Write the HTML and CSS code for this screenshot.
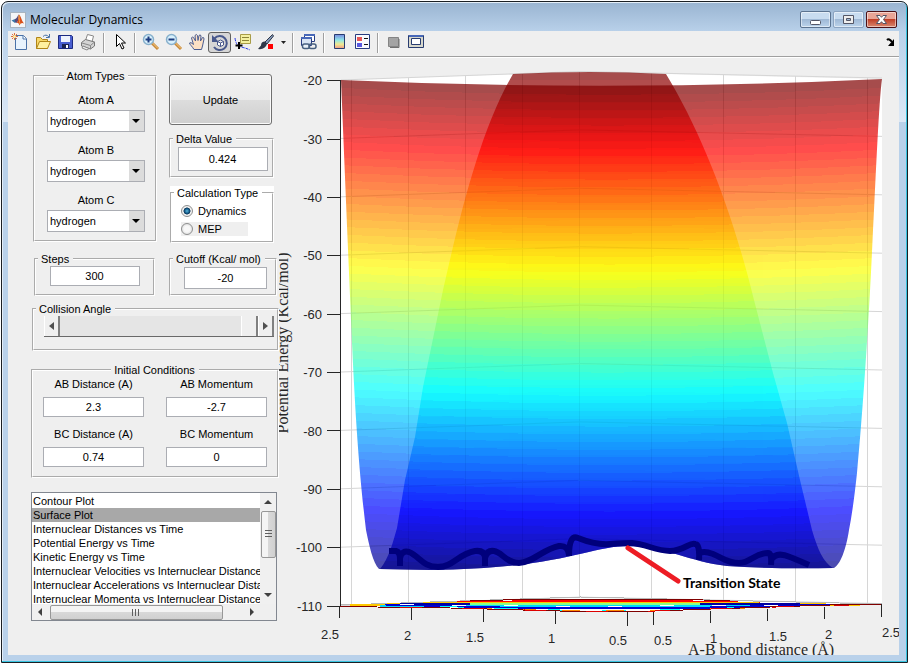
FILE: index.html
```
<!DOCTYPE html>
<html lang="en">
<head>
  <meta charset="UTF-8">
  <title>Molecular Dynamics</title>
  <link rel="stylesheet" href="styles.css">
</head>
<body>
  <div class="window">
    <header class="titlebar">
      <svg class="app-icon" viewBox="0 0 16 16">
        <rect x=".5" y=".5" width="15" height="15" fill="#f4f6f8" stroke="#a8b4c0"/>
        <path d="M1.500 8.500 5 7l2 2-2 2z" fill="#3a78a8"/>
        <path d="M5 7c2 0 2.500-4 4-4.500L8 9l-1.500 2L5 10z" fill="#5a4a78"/>
        <path d="M9 2.500c1.500.5 2.500 6 5 9-2-.8-3-.8-4.500 2C9 11.500 8 10.500 6.500 11 8.500 9 8.500 5 9 2.500z" fill="#d8501c"/>
        <path d="M9 3c.3 4 .3 7 1 9" stroke="#f8a040" fill="none"/>
      </svg>
      <h1>Molecular Dynamics</h1>
      <div class="window-buttons">
        <button type="button" aria-label="Minimize"><svg viewBox="0 0 31 17"><rect x="10.500" y="9.500" width="10" height="4" rx="1" fill="#fff" stroke="#535666"/></svg></button>
        <button type="button" class="dim" aria-label="Maximize"><svg viewBox="0 0 31 17"><path d="M10.500 4.500h10v8h-10zM13.500 7.500v2h4v-2z" fill="#eee" fill-rule="evenodd" stroke="#535666"/></svg></button>
        <button type="button" class="close" aria-label="Close"><svg viewBox="0 0 31 17"><path d="M10.500 4.500h3.500l1.500 1.800L17 4.500h3.500l-3 4 3 4H17l-1.500-1.800-1.500 1.800h-3.500l3-4z" fill="#fff" stroke="#535666"/></svg></button>
      </div>
    </header>

    <main class="client">
      <div class="toolbar">
        <button type="button" aria-label="New Figure"><svg viewBox="0 0 18 18"><path d="M4.500 2.500h8l3 3v11h-11z" fill="#e8f3fd" stroke="#4a72a8"/><path d="M12 2.500v3.500h3.500" fill="#fff" stroke="#4a72a8"/><path d="M1 1l5 5M6 1 1 6M3.500 0v7M0 3.500h7" stroke="#e0703c"/><circle cx="3.500" cy="3.500" r="1.500" fill="#fff0a0"/></svg></button>
        <button type="button" aria-label="Open File"><svg viewBox="0 0 18 18"><path d="M2.500 15.500v-11h4l2 2h5v9z" fill="#f8d868" stroke="#b08418"/><path d="M2.500 15.500l3-7h11l-3 7z" fill="#fff0a0" stroke="#b08418"/><path d="M9 3.500q3-3 6 .5M15.500 1v3.500H12" fill="none" stroke="#4a72a8"/></svg></button>
        <button type="button" aria-label="Save Figure"><svg viewBox="0 0 18 18"><path d="M1.500 2.500h13l1 1v12h-14z" fill="#4a5fd0" stroke="#1c2a80"/><path d="M4 3h9v6H4z" fill="#eef2fc"/><path d="M5 11h7v4H5z" fill="#1c2450"/><path d="M9 12h2v3H9z" fill="#fff"/></svg></button>
        <button type="button" aria-label="Print Figure"><svg viewBox="0 0 18 18"><path d="M5.500 7.500l2-6 6 1.500-1.500 6z" fill="#fff" stroke="#888"/><path d="M1.500 9.500l4-3 9 2.500v4l-4 3-9-3z" fill="#d4d4d4" stroke="#777"/><path d="M2 10l8.500 2.500L14.500 9M10.500 12.500V16" fill="none" stroke="#888"/><path d="M3 13l6 2.500-2 1.500-5-2z" fill="#eee" stroke="#888"/></svg></button>
        <span class="separator"></span>
        <button type="button" aria-label="Edit Plot"><svg viewBox="0 0 18 18"><path d="M5.500 1.500v12l3-3 2.500 5.500 2-1L10.500 10h4z" fill="#fff" stroke="#000"/></svg></button>
        <span class="separator"></span>
        <button type="button" aria-label="Zoom In"><svg viewBox="0 0 18 18"><path d="M10 10l6 6" stroke="#c88838" stroke-width="3"/><path d="M10 9.500l6 6" stroke="#f8d088"/><circle cx="6.500" cy="6.500" r="5" fill="#d8f0fc" stroke="#88b0cc" stroke-width="1.500"/><path d="M3.500 6.500h6M6.500 3.500v6" stroke="#1c3c80" stroke-width="2"/></svg></button>
        <button type="button" aria-label="Zoom Out"><svg viewBox="0 0 18 18"><path d="M10 10l6 6" stroke="#c88838" stroke-width="3"/><path d="M10 9.500l6 6" stroke="#f8d088"/><circle cx="6.500" cy="6.500" r="5" fill="#d8f0fc" stroke="#88b0cc" stroke-width="1.500"/><path d="M3.500 6.500h6" stroke="#1c3c80" stroke-width="2"/></svg></button>
        <button type="button" aria-label="Pan"><svg viewBox="0 0 18 18"><path d="M6 16.500C4 13 2 12 1.500 10q1-1.500 4 1.500L3.500 5Q4.500 3 5.500 4.500L7.500 8 7 2.500Q8.500.5 9.500 2.500L10 7.500l1-5q1.500-1.500 2 .5L12.500 8l2-3.500q1.500-.5 1.500 1.500l-1.500 7-1 3.500z" fill="#fce0c4" stroke="#4a5c90"/></svg></button>
        <button type="button" class="pressed" aria-label="Rotate 3D"><svg viewBox="0 0 18 18"><path d="M3.500 4.500A7 7 0 1 1 3 13" fill="none" stroke="#48588c" stroke-width="2"/><path d="M1 1v7h7z" fill="#48588c"/><path d="M6.500 7.500l3-1.500 3 1.500v3.500l-3 1.500-3-1.500zM6.500 7.500l3 1.500 3-1.500M9.500 9v3.500" fill="#fff" stroke="#48588c"/></svg></button>
        <button type="button" aria-label="Data Cursor"><svg viewBox="0 0 18 18"><path d="M1 5q1 8 6 9t9 3" fill="none" stroke="#2838e8" stroke-dasharray="3 1"/><path d="M6.500 1.500h10v9h-10z" fill="#f4f0a0" stroke="#a89c48"/><path d="M8 4.500h7M8 7.500h7" stroke="#8c8438"/><path d="M5 9v7M1.500 12.500h7" stroke="#000" stroke-width="2"/></svg></button>
        <button type="button" aria-label="Brush"><svg viewBox="0 0 18 18"><path d="M15.500 1.500L8 9l2 2 6.500-8z" fill="#8498b8" stroke="#303848"/><path d="M8 8.500q-4 0-4 4L1 16q7 1 9-5z" fill="#303848"/><path d="M11 11h5v5h-5z" fill="#f00"/></svg></button>
        <button type="button" class="drop" aria-label="Brush options"><svg viewBox="0 0 12 18"><path d="M4 8h5l-2.500 3z" fill="#222"/></svg></button>
        <span class="separator"></span>
        <button type="button" aria-label="Link Plot"><svg viewBox="0 0 18 18"><path d="M4.500 1.500h10v7h-10z" fill="#fff" stroke="#283c80"/><path d="M4 2h11" stroke="#4868b8" stroke-width="2"/><path d="M1.500 4.500h10v8h-10z" fill="#d8e4f4" stroke="#283c80"/><path d="M1 5h11" stroke="#4868b8" stroke-width="2"/><rect x="2.500" y="11" width="7" height="4.500" rx="2" fill="#e8f0f8" stroke="#486080" stroke-width="1.500"/><rect x="9" y="11" width="7" height="4.500" rx="2" fill="none" stroke="#486080" stroke-width="1.500"/></svg></button>
        <span class="separator"></span>
        <button type="button" aria-label="Insert Colorbar"><svg viewBox="0 0 18 18"><defs><linearGradient id="bar" x2="0" y2="1"><stop offset="0" stop-color="#7888e0"/><stop offset=".4" stop-color="#90e8e8"/><stop offset=".7" stop-color="#f0e890"/><stop offset="1" stop-color="#f09888"/></linearGradient></defs><path d="M3.500 1.500h10v14h-10z" fill="url(#bar)" stroke="#283c70"/></svg></button>
        <button type="button" aria-label="Insert Legend"><svg viewBox="0 0 18 18"><path d="M1.500 1.500h14v14h-14z" fill="#f8fafe" stroke="#283c80"/><path d="M3 4h5v4H3z" fill="#e85858"/><path d="M3 10h5v4H3z" fill="#5858e0"/><path d="M10 5.500h4M10 11.500h4" stroke="#111"/></svg></button>
        <span class="separator"></span>
        <button type="button" aria-label="Hide Plot Tools"><svg viewBox="0 0 18 18"><path d="M3.500 4.500h10v9h-10z" fill="#a4a4a4" stroke="#848484"/><path d="M14 6v8.500H5" fill="none" stroke="#707070"/></svg></button>
        <button type="button" aria-label="Show Plot Tools"><svg viewBox="0 0 18 18"><path d="M.5 2.500h15v12h-15z" fill="#d8d8cc" stroke="#283c70"/><path d="M1 3h14" stroke="#4868b8" stroke-width="2"/><path d="M3.500 5.500h9v6h-9z" fill="#fff" stroke="#283c70"/></svg></button>
        <button type="button" class="dock" aria-label="Dock Figure"><svg viewBox="0 0 12 18"><path d="M2 7q2-2 5 2" fill="none" stroke="#000" stroke-width="2"/><path d="M9 6v7H3z" fill="#000"/></svg></button>
      </div>

      <div class="figure">
        <form class="controls">
          <div class="columns">
            <fieldset class="atoms">
              <legend>Atom Types</legend>
              <label for="atomA">Atom A</label>
              <span class="dropdown"><select id="atomA"><option>hydrogen</option></select></span>
              <label for="atomB">Atom B</label>
              <span class="dropdown"><select id="atomB"><option>hydrogen</option></select></span>
              <label for="atomC">Atom C</label>
              <span class="dropdown"><select id="atomC"><option>hydrogen</option></select></span>
            </fieldset>

            <div class="column">
              <button type="button" class="update">Update</button>
              <fieldset class="delta">
                <legend><label for="delta">Delta Value</label></legend>
                <input type="text" id="delta" value="0.424">
              </fieldset>
              <div class="calc">
                <fieldset>
                  <legend>Calculation Type</legend>
                  <label class="radio"><input type="radio" name="calc" checked>Dynamics</label>
                  <label class="radio shaded"><input type="radio" name="calc">MEP</label>
                </fieldset>
              </div>
            </div>
          </div>

          <div class="columns limits">
            <fieldset class="steps">
              <legend><label for="steps">Steps</label></legend>
              <input type="text" id="steps" value="300">
            </fieldset>
            <fieldset class="cutoff">
              <legend><label for="cutoff">Cutoff (Kcal/ mol)</label></legend>
              <input type="text" id="cutoff" value="-20">
            </fieldset>
          </div>

          <fieldset class="angle">
            <legend><label for="angle">Collision Angle</label></legend>
            <div class="slider">
              <button type="button" aria-label="Decrease angle"><svg viewBox="0 0 5 8"><path d="M5 0v8L0 4z"/></svg></button>
              <input type="range" id="angle" min="0" max="180" value="180">
              <button type="button" aria-label="Increase angle"><svg viewBox="0 0 5 8"><path d="M0 0v8l5-4z"/></svg></button>
            </div>
          </fieldset>

          <fieldset class="initial">
            <legend>Initial Conditions</legend>
            <div class="conditions">
              <div class="field"><label for="abDist">AB Distance (A)</label><input type="text" id="abDist" value="2.3"></div>
              <div class="field"><label for="abMom">AB Momentum</label><input type="text" id="abMom" value="-2.7"></div>
              <div class="field"><label for="bcDist">BC Distance (A)</label><input type="text" id="bcDist" value="0.74"></div>
              <div class="field"><label for="bcMom">BC Momentum</label><input type="text" id="bcMom" value="0"></div>
            </div>
          </fieldset>

          <div class="plot-list">
            <select size="8" aria-label="Plot type">
              <option>Contour Plot</option>
              <option selected>Surface Plot</option>
              <option>Internuclear Distances vs Time</option>
              <option>Potential Energy vs Time</option>
              <option>Kinetic Energy vs Time</option>
              <option>Internuclear Velocities vs Internuclear Distance</option>
              <option>Internuclear Accelerations vs Internuclear Distance</option>
              <option>Internuclear Momenta vs Internuclear Distance</option>
            </select>
            <div class="scrollbar vertical">
              <svg viewBox="0 0 8 4"><path d="M0 4h8L4 0z"/></svg>
              <span class="thumb"></span>
              <svg viewBox="0 0 8 4"><path d="M0 0h8L4 4z"/></svg>
            </div>
            <div class="scrollbar horizontal">
              <svg viewBox="0 0 4 8"><path d="M4 0v8L0 4z"/></svg>
              <span class="thumb"></span>
              <svg viewBox="0 0 4 8"><path d="M0 0v8l4-4z"/></svg>
            </div>
          </div>
        </form>

        <svg class="plot" viewBox="279 57 620 598" preserveAspectRatio="xMinYMin meet">
          <defs>
            <clipPath id="frontClip">
              <path d="M341 80Q610 92 882 79C879 100 876 170 873 230C870 300 864 400 857 473Q853 510 849 530C846 550 840 565 834 568Q770 569 727 566C690 562 665 546 628 546C590 546 560 569 430 570L379 569C373 563 369 545 366 530C360 480 356 430 352 343L347 226Z"/>
            </clipPath>
            <clipPath id="backClip">
              <path d="M513 74Q590 70 666 74C700 130 731 206 754 300L773 373 787 423 800 480 812 530C818 550 823 562 833 568Q770 569 727 566C690 562 665 546 628 546C590 546 560 569 430 570L380 569C389 558 393 542 397 528L405 480 415 437 423 387 443 290C460 215 480 130 513 74Z"/>
            </clipPath>
          </defs>

          <path d="M341 80 580 72 882 79V604L640 612 341 606Z" fill="#fff"/>
          <g id="grid" class="grid"></g>

          <g id="back" clip-path="url(#backClip)" opacity=".7"></g>
          <g id="front" clip-path="url(#frontClip)" opacity=".7"></g>
          <g id="gridOver" class="grid over"></g>

          <!-- trajectory on the surface -->
          <path class="trail" d="M389 551h7q4 1 4 8v7M400 558q2-8 9-6c10 4 14 15 29 15s20-13 37-16q9-1 10 6v9M485 558q2-8 9-7c8 1 12 12 25 12s24-14 40-17q9-1 10 9M569 556q0-22 9-18c10 4 20 7 32 6q15-1 22-1c14 1 24 8 38 8 13 0 20-9 25-7q5 0 4 16M700 554q2-4 13 0c10 4 14 9 26 9s15-10 29-10q4 0 3 12M771 560c4-7 12-6 19-3q10 4 19 8"/>

          <!-- contours projected on the floor -->
          <g class="contours">
            <path stroke="#b8b8b8" d="M341 605 580 597 882 604"/>
            <path stroke="#800000" d="M470 601 520 599.500 580 599H650L730 600.500"/>
            <path stroke="#f00" stroke-width="2" d="M430 603 540 601H670L760 603"/>
            <path stroke="#ffc800" stroke-width="2" d="M350 605.500 460 602.500 560 602.500H690L860 605"/>
            <path stroke="#8f8" stroke-width="2" d="M400 604.500 530 604H680L780 605"/>
            <path stroke="#00d8ff" stroke-width="2" d="M380 605.500 500 605.500 600 606H700L830 604.500"/>
            <path stroke="#0000d0" stroke-width="2" d="M385 604.500 500 607.500 600 608H690L830 604.500"/>
            <path stroke="#0000a0" stroke-width="2" d="M400 603.500 470 604.500M700 604.500 800 603.500"/>
            <path stroke="#fff" stroke-dasharray="14 38" d="M400 604.500 520 606 650 606 790 605"/>
            <path stroke="#0ff" stroke-dasharray="24 30" d="M440 606.500 560 610H660L760 607"/>
            <path stroke="#f80" stroke-dasharray="18 26" d="M430 607 560 610 640 611 780 607"/>
            <path stroke="#800000" d="M340 606.500 450 608 560 611H655L740 608 830 605 882 604.500"/>
            <path stroke="#d00" stroke-dasharray="22 40" d="M400 607.500 470 608.500 560 611H655L740 608 850 605"/>
          </g>

          <g class="axes">
            <path d="M340.500 80V606M327 80.500h13M327 139h13M327 197.500h13M327 255.500h13M327 314h13M327 372.500h13M327 430.500h13M327 489.500h13M327 547.500h13M327 606h13"/>
            <path d="M339.500 606v12M411.500 608v12M483.500 609v13M555.500 611v13M627.500 612v14M653.500 612v13M710.500 611v12M767.500 609v12M824.500 607v12M881.500 604v13"/>
          </g>

          <g class="ticks" text-anchor="end">
            <text x="322" y="85">-20</text>
            <text x="322" y="144">-30</text>
            <text x="322" y="202">-40</text>
            <text x="322" y="260">-50</text>
            <text x="322" y="319">-60</text>
            <text x="322" y="377">-70</text>
            <text x="322" y="436">-80</text>
            <text x="322" y="494">-90</text>
            <text x="322" y="552">-100</text>
            <text x="322" y="611">-110</text>
          </g>
          <g class="ticks">
            <text x="321" y="639">2.5</text>
            <text x="404" y="640">2</text>
            <text x="466" y="642">1.5</text>
            <text x="548" y="643">1</text>
            <text x="609" y="645">0.5</text>
            <text x="654" y="645">0.5</text>
            <text x="710" y="643">1</text>
            <text x="769" y="641">1.5</text>
            <text x="825" y="639">2</text>
            <text x="882" y="637">2.5</text>
          </g>
          <text class="axis-title" x="688" y="655">A-B bond distance (Å)</text>
          <text class="axis-title" text-anchor="middle" transform="translate(288 343) rotate(-90)">Potential Energy (Kcal/mol)</text>

          <path d="M628 548 678 581" stroke="#ed1c24" stroke-width="5" stroke-linecap="round"/>
          <text class="note" x="683" y="588">Transition State</text>
        </svg>
      </div>
    </main>
  </div>
  <script src="plot.js"></script>
</body>
</html>
```
FILE: styles.css
```
:root {
  --face: #efefef;
  --frame: #b9d1ea;
  --line: #abadb3;
}

* {
  box-sizing: border-box;
  margin: 0;
  padding: 0;
}

body {
  display: flex;
  height: 100vh;
  padding: 1px;
  background: #fff;
  font-family: "Liberation Sans", Arial, sans-serif;
  font-size: 11px;
  line-height: 14px;
  color: #000;
  overflow: hidden;
}

button, input, select {
  font: inherit;
  color: inherit;
}

.window {
  flex: 1;
  display: flex;
  flex-direction: column;
  min-width: 0;
  padding: 0 8px 7px 6px;
  border: 1px solid #1a1f24;
  border-radius: 7px 7px 0 0;
  background: linear-gradient(#99b4d1, #b9d1ea 30px, #dce8f6 120px, var(--frame) 120px);
  box-shadow: inset -1px -1px 0 #38c4e0, inset 1px 1px 0 #e4eef8;
}

/* title bar */
.titlebar {
  display: flex;
  align-items: center;
  gap: 4px;
  height: 29px;
  padding: 6px 2px 0;
}

.app-icon {
  width: 16px;
  height: 16px;
}

.titlebar h1 {
  flex: 1;
  font-family: "Open Sans", "Noto Sans", sans-serif;
  font-size: 12px;
  font-weight: 400;
}

.window-buttons {
  display: flex;
  gap: 2px;
}

.window-buttons button {
  width: 31px;
  height: 17px;
  border: 1px solid #5b7390;
  border-radius: 2px;
  background: linear-gradient(#c8dcf0 45%, #9fb9d6 50%, #bcd4ec);
  box-shadow: inset 0 0 0 1px rgba(255, 255, 255, 0.5);
}

.window-buttons svg {
  display: block;
  width: 31px;
  height: 17px;
  margin: -1px;
}

.window-buttons .dim {
  border-color: #8ba3c0;
}

.window-buttons .close {
  border-color: #4c1015;
  background: linear-gradient(#e9a596 45%, #c04028 50%, #d88870);
}

/* toolbar */
.client {
  flex: 1;
  display: flex;
  flex-direction: column;
  min-height: 0;
  background: var(--face);
}

.toolbar {
  display: flex;
  height: 26px;
  padding-bottom: 3px;
  border-bottom: 1px solid #a0a0a0;
  box-shadow: 0 1px 0 #fff;
}

.toolbar button {
  display: flex;
  align-items: center;
  justify-content: center;
  width: 23px;
  border: 0;
  background: none;
}

.toolbar svg {
  width: 18px;
  height: 18px;
}

.toolbar .pressed {
  height: 21px;
  margin-top: 1px;
  border: 1px solid #606060;
  border-radius: 3px;
  background: #d6d6d6;
}

.toolbar .drop {
  width: 12px;
}

.toolbar .drop svg,
.toolbar .dock svg {
  width: 12px;
}

.toolbar .dock {
  width: 16px;
  margin-left: auto;
}

.separator {
  width: 8px;
  margin: 2px 0 0;
  background: linear-gradient(90deg, transparent 3px, #a0a0a0 3px, #a0a0a0 4px, #fff 4px, #fff 5px, transparent 5px);
}

/* control panel */
.figure {
  flex: 1;
  display: flex;
  min-height: 0;
}

.controls {
  flex: none;
  width: 271px;
  padding: 12px 0 0 23px;
}

fieldset {
  min-width: 0;
  padding: 0 2px;
  border: 2px groove #fff;
}

legend {
  padding: 0 4px 0 3px;
}

input[type="text"] {
  display: block;
  height: 20px;
  border: 1px solid var(--line);
  background: #fff;
  text-align: center;
}

.columns {
  display: flex;
  gap: 12px;
  padding-left: 2px;
}

.atoms {
  display: flex;
  flex-direction: column;
  width: 124px;
  height: 173px;
  padding: 10px 10px 0 12px;
}

.atoms legend {
  margin: 0 auto;
}

.atoms label {
  margin-bottom: 3px;
  text-align: center;
}

.dropdown {
  position: relative;
  margin-bottom: 11px;
}

.dropdown select {
  display: block;
  appearance: none;
  width: 98px;
  height: 22px;
  padding-left: 2px;
  border: 1px solid var(--line);
  border-radius: 0;
  background: linear-gradient(90deg, transparent 81px, #dcdcdc 81px) #fff;
}

.dropdown::after {
  content: "";
  position: absolute;
  top: 9px;
  right: 5px;
  border: 4px solid transparent;
  border-top-color: #000;
  border-bottom: 0;
  pointer-events: none;
}

.column {
  display: flex;
  flex-direction: column;
  gap: 7px;
  width: 105px;
  padding-top: 5px;
}

.update {
  width: 103px;
  height: 51px;
  border: 1px solid #707070;
  border-radius: 3px;
  background: linear-gradient(#f2f2f2, #ebebeb 50%, #dddddd 50%, #cfcfcf);
  box-shadow: inset 0 0 0 1px #fafafa;
}

.delta {
  height: 46px;
  padding-left: 4px;
}

.delta legend {
  margin-left: -2px;
}

.delta input {
  width: 90px;
  height: 24px;
  margin: 1px auto 0;
}

.calc {
  margin: 1px 0 0 1px;
  background: #fff;
}

.calc fieldset {
  height: 57px;
}

.radio {
  display: flex;
  align-items: center;
  gap: 5px;
  width: 67px;
  margin: 4px 0 0 7px;
}

.shaded {
  background: var(--face);
}

.radio input {
  appearance: none;
  width: 12px;
  height: 12px;
  border: 1px solid #8e8f8f;
  border-radius: 50%;
  background: radial-gradient(#f8f8f8 40%, #d0d0d0);
}

.radio input:checked {
  background: radial-gradient(circle closest-side, #58b8e0, #10507c 50%, #0c3454 65%, #f0f0f0 75%);
}

.limits {
  gap: 14px;
  padding-left: 3px;
  margin-top: 9px;
}

.limits fieldset {
  height: 44px;
}

.steps {
  width: 121px;
}

.steps input {
  width: 90px;
  margin: 0 auto;
}

.cutoff {
  width: 108px;
}

.cutoff input {
  width: 83px;
  height: 22px;
  margin: 1px 6px 0 auto;
}

.angle {
  height: 49px;
  margin: 6px 0 0 1px;
}

.slider {
  display: flex;
  width: 230px;
  height: 21px;
  margin-left: 8px;
  border-bottom: 1px solid #696969;
}

.slider button {
  display: flex;
  align-items: center;
  justify-content: center;
  width: 16px;
  border: solid;
  border-width: 0 2px 0 1px;
  border-color: #696969 #808080 #696969 #fff;
  background: var(--face);
}

.slider svg {
  width: 5px;
  height: 8px;
  fill: #505050;
}

.slider input {
  flex: 1;
  appearance: none;
  min-width: 0;
  background: #e5e5e5;
}

.slider input::-webkit-slider-thumb {
  appearance: none;
  width: 17px;
  height: 20px;
  border: solid;
  border-width: 0 2px 0 1px;
  border-color: #696969 #808080 #696969 #fff;
  background: var(--face);
}

.initial {
  height: 115px;
  margin-top: 12px;
}

.initial legend {
  margin: 0 auto;
}

.conditions {
  display: grid;
  grid-template-columns: 101px 101px;
  gap: 10px 22px;
  padding-left: 8px;
}

.field label {
  display: block;
  margin-bottom: 6px;
  text-align: center;
}

.field input {
  width: 100%;
}

/* plot list */
.plot-list {
  display: grid;
  grid-template: 111px 16px / 1fr 16px;
  width: 246px;
  margin-top: 14px;
  border: 1px solid #828790;
  background: var(--face);
}

.plot-list select {
  width: 100%;
  height: 111px;
  padding-top: 1px;
  border: 0;
  border-radius: 0;
  background: #fff;
  overflow: hidden;
}

.plot-list option {
  min-height: 14px;
  height: 14px;
  padding: 1px 1px 0;
  line-height: 14px;
  overflow: hidden;
}

.plot-list option:checked {
  background: linear-gradient(#a8a8a8, #a8a8a8);
  color: #000;
}

.scrollbar {
  display: flex;
  align-items: center;
  justify-content: space-between;
  background: #f0f0f0;
}

.scrollbar svg {
  fill: #404040;
}

.scrollbar .thumb {
  border: 1px solid #979797;
  border-radius: 2px;
}

.vertical {
  flex-direction: column;
  padding: 7px 0;
}

.vertical svg {
  width: 8px;
  height: 4px;
}

.vertical .thumb {
  width: 15px;
  height: 47px;
  margin: 7px 0 auto;
  background:
    repeating-linear-gradient(#606060 0 1px, transparent 1px 3px) center / 7px 9px no-repeat,
    linear-gradient(90deg, #f4f4f4 50%, #d8d8d8 50%, #d0d0d0);
}

.horizontal {
  padding: 0 6px;
}

.horizontal svg {
  width: 4px;
  height: 8px;
}

.horizontal .thumb {
  width: 173px;
  height: 15px;
  margin: 0 auto 0 8px;
  background:
    repeating-linear-gradient(90deg, #606060 0 1px, transparent 1px 3px) center / 9px 7px no-repeat,
    linear-gradient(#f4f4f4 50%, #d8d8d8 50%, #d0d0d0);
}

/* surface plot */
.plot {
  flex: 1;
  display: block;
  min-width: 0;
  height: 100%;
}

.grid {
  fill: none;
  stroke: #dedede;
}

.over {
  stroke: #000;
  opacity: 0.03;
}

.trail {
  fill: none;
  stroke: #00007c;
  stroke-width: 6;
  stroke-linejoin: round;
}

.contours {
  fill: none;
  shape-rendering: crispEdges;
}

.axes {
  stroke: #262626;
  shape-rendering: crispEdges;
}

.ticks {
  font-size: 13px;
  fill: #262626;
}

.axis-title {
  font-family: "Liberation Serif", "Times New Roman", serif;
  font-size: 16px;
  fill: #262626;
}

.note {
  font-family: Lato, "Open Sans", sans-serif;
  font-size: 14px;
  font-weight: 700;
}
```
FILE: plot.js
```
const NS = 'http://www.w3.org/2000/svg';
const LEVELS = 64;

function addPath(parent, attrs) {
  const path = document.createElementNS(NS, 'path');
  for (const key in attrs) path.setAttribute(key, attrs[key]);
  parent.appendChild(path);
}

// jet colormap, t = 0 is dark blue and t = 1 is dark red
function jet(t) {
  const channel = c => Math.round(255 * Math.max(0, Math.min(1, 1.5 - Math.abs(4 * t - c))));
  return `rgb(${channel(3)}, ${channel(2)}, ${channel(1)})`;
}

// each band reaches down to the floor, the next one covers it
function drawBands(id, top, bottom, sag) {
  const group = document.getElementById(id);
  for (let i = 0; i < LEVELS; i++) {
    const y = i === 0 ? top - 20 : top + (bottom - top) * i / LEVELS;
    addPath(group, {
      d: `M336 ${y}Q610 ${y + 2 * sag} 886 ${y}V600H336Z`,
      fill: jet(1 - i / (LEVELS - 1)),
      'shape-rendering': 'crispEdges'
    });
  }
}

function drawGrid(id) {
  const group = document.getElementById(id);
  for (let i = 0; i < 10; i++) {
    const y = 80 + i * 58.4;
    addPath(group, { d: `M341 ${y}L580 ${y - 8.5}L882 ${y - 2}` });
  }
  for (const x of [351.5, 408.5, 465.5, 522.5, 579.5, 651.5, 723.5, 795.5, 867.5]) {
    const rise = x < 580 ? (x - 341) / 28 : (882 - x) / 46 + 2;
    addPath(group, { d: `M${x} ${80 - rise}V${606 - rise}` });
  }
}

drawGrid('grid');
drawGrid('gridOver');
drawBands('back', 74, 574, -2);
drawBands('front', 80, 574, 7);
```
